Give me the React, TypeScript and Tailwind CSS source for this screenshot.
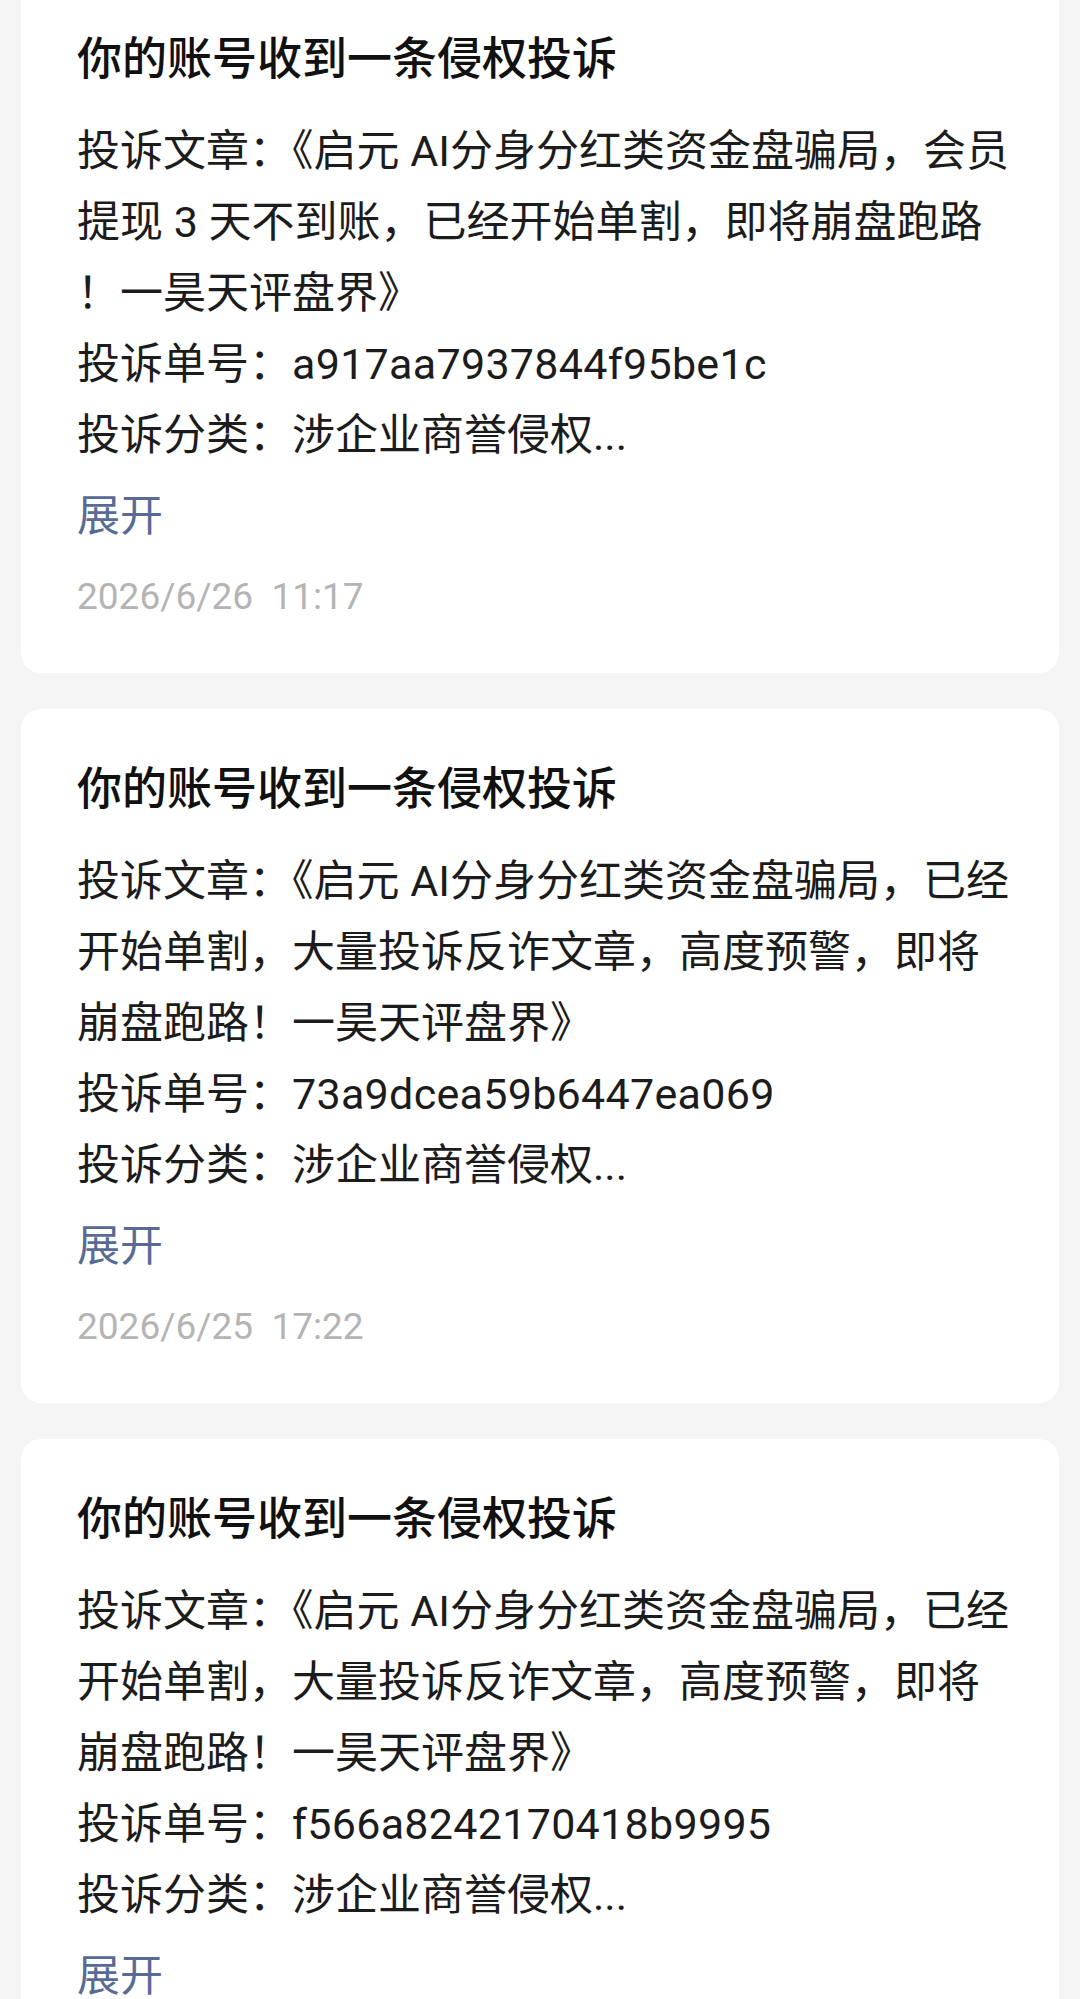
import React from "react";

type Complaint = {
  article: string[];
  id: string;
  category: string;
  time: string;
};

// Each article line is kept as it wraps in the screenshot (punctuation may start a line).
const complaints: Complaint[] = [
  {
    article: [
      "投诉文章：《启元 AI分身分红类资金盘骗局，会员",
      "提现 3 天不到账，已经开始单割，即将崩盘跑路",
      "！一昊天评盘界》",
    ],
    id: "a917aa7937844f95be1c",
    category: "涉企业商誉侵权...",
    time: "2026/6/26  11:17",
  },
  {
    article: [
      "投诉文章：《启元 AI分身分红类资金盘骗局，已经",
      "开始单割，大量投诉反诈文章，高度预警，即将",
      "崩盘跑路！一昊天评盘界》",
    ],
    id: "73a9dcea59b6447ea069",
    category: "涉企业商誉侵权...",
    time: "2026/6/25  17:22",
  },
  {
    article: [
      "投诉文章：《启元 AI分身分红类资金盘骗局，已经",
      "开始单割，大量投诉反诈文章，高度预警，即将",
      "崩盘跑路！一昊天评盘界》",
    ],
    id: "f566a8242170418b9995",
    category: "涉企业商誉侵权...",
    time: "2026/6/24  09:41",
  },
];

function ComplaintCard({ item }: { item: Complaint }) {
  return (
    <div className="rounded-[20px] bg-white pl-[56px] pr-[36px] pt-[51px] pb-[41px]">
      <h2 className="text-[45px] leading-[60px] font-medium text-[#111111] whitespace-nowrap">
        你的账号收到一条侵权投诉
      </h2>
      <div className="mt-[26px] text-[43px] leading-[71px] text-[#1c1c1c]">
        {item.article.map((line, i) => (
          <p key={i} className="whitespace-pre">
            {line}
          </p>
        ))}
        <p className="whitespace-nowrap">
          投诉单号：<span className="tracking-[0.3px]">{item.id}</span>
        </p>
        <p className="whitespace-nowrap">投诉分类：{item.category}</p>
      </div>
      <button className="mt-[10px] block text-[43px] leading-[71px] text-[#576b95]">展开</button>
      <p className="mt-[9px] text-[37px] leading-[71px] text-[#b4b4b4] whitespace-pre">{item.time}</p>
    </div>
  );
}

export default function App() {
  return (
    <div className="min-h-screen overflow-hidden bg-[#f4f5f4] font-['Roboto','Noto_Sans_CJK_SC',sans-serif]">
      <div className="-mt-[21px] flex flex-col gap-[36px] pl-[21px] pr-[21px]">
        {complaints.map((c) => (
          <ComplaintCard key={c.id} item={c} />
        ))}
      </div>
    </div>
  );
}
